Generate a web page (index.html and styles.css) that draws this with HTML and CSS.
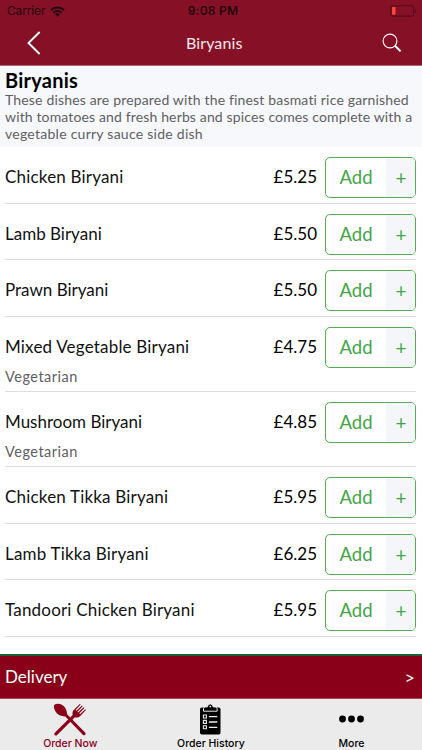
FILE: index.html
```html
<!DOCTYPE html>
<html lang="en">
<head>
<meta charset="utf-8">
<title>Biryanis</title>
<link rel="stylesheet" href="styles.css">
</head>
<body>
<div class="app">
  <header class="top">
    <div class="status">
      <div class="carrier"><span>Carrier</span>
        <svg width="15" height="11" viewBox="0 0 15 11" fill="none" stroke="#25050c" stroke-width="2"><path d="M.9 4.2a9.4 9.4 0 0 1 13.2 0M3.3 6.7a6 6 0 0 1 8.4 0"/><path d="M5.1 8.3a3.4 3.4 0 0 1 4.8 0L7.5 10.7z" fill="#25050c" stroke="none"/></svg>
      </div>
      <span class="clock">9:08 PM</span>
      <svg class="battery" width="27" height="12" viewBox="0 0 27 12"><rect x=".7" y=".7" width="23" height="10.4" rx="2.2" fill="none" stroke="#5b0b1a" stroke-width="1.1"/><rect x="2" y="2" width="3.6" height="7.8" rx=".7" fill="#fb4638"/><path d="M25 4v4q1.5-.6 1.5-2T25 4" fill="#5b0b1a"/></svg>
    </div>
    <div class="nav">
      <svg class="back" width="14" height="24" viewBox="0 0 14 24" fill="none" stroke="#fff" stroke-width="1.9"><path d="M12.6 1 1.5 12l11.1 11"/></svg>
      <h1>Biryanis</h1>
      <svg class="search" width="20" height="20" viewBox="0 0 20 20" fill="none" stroke="#fff"><circle cx="8" cy="8" r="6.9" stroke-width="1.1"/><path d="m13 12.8 5.6 5.6" stroke-width="2"/></svg>
    </div>
  </header>
  <section class="intro">
    <h2>Biryanis</h2>
    <p><span class="l1">These dishes are prepared with the finest basmati rice garnished</span><br><span class="l2">with tomatoes and fresh herbs and spices comes complete with a</span><br><span class="l3">vegetable curry sauce side dish</span></p>
  </section>
  <main class="menu">
    <div class="row"><div class="dish">Chicken Biryani</div><span class="price">£5.25</span><button class="add"><span>Add</span><i>+</i></button></div>
    <div class="row"><div class="dish snug">Lamb Biryani</div><span class="price">£5.50</span><button class="add"><span>Add</span><i>+</i></button></div>
    <div class="row"><div class="dish snug">Prawn Biryani</div><span class="price">£5.50</span><button class="add"><span>Add</span><i>+</i></button></div>
    <div class="row tall"><div class="dish">Mixed Vegetable Biryani<small>Vegetarian</small></div><span class="price">£4.75</span><button class="add"><span>Add</span><i>+</i></button></div>
    <div class="row tall"><div class="dish snug">Mushroom Biryani<small>Vegetarian</small></div><span class="price">£4.85</span><button class="add"><span>Add</span><i>+</i></button></div>
    <div class="row"><div class="dish">Chicken Tikka Biryani</div><span class="price">£5.95</span><button class="add"><span>Add</span><i>+</i></button></div>
    <div class="row"><div class="dish">Lamb Tikka Biryani</div><span class="price">£6.25</span><button class="add"><span>Add</span><i>+</i></button></div>
    <div class="row"><div class="dish">Tandoori Chicken Biryani</div><span class="price">£5.95</span><button class="add"><span>Add</span><i>+</i></button></div>
  </main>
  <div class="delivery"><span>Delivery</span><span class="arrow">&gt;</span></div>
  <nav class="tabs">
    <div class="tab active">
      <svg width="34" height="34" viewBox="0 0 34 34" fill="#8b0019"><path d="M1.4 1.8C4.3-.3 9.6 1 12 4.6c1.8 2.6 1.8 5 2.3 6.8l17.8 18.2c1.5 1.7-.7 3.8-2.3 2.2L12.3 13.4c-2.4-.4-5.3-.2-7.7-2.4C1.4 8.1.1 3.9 1.4 1.8z"/><path d="M1.8 29.7 19.7 12c-.4-2.4-.2-3.8 1.3-5.3l5.8-5.8.8.7-5 5.3.8.8 5.5-5.3.8.8-5.3 5.5.8.8 5.4-5.2.8.8-5.2 5.4.8.8 5.2-5 .7.8-5.7 5.8c-1.8 1.7-3.4 1.8-5.3 1.3L4.1 32c-1.7 1.6-3.9-.6-2.3-2.3z"/></svg>
      <span>Order Now</span>
    </div>
    <div class="tab">
      <svg width="22" height="33" viewBox="0 0 22 33"><rect x="0" y="4.5" width="20.5" height="27" rx="1.8" fill="#000"/><path d="M3.5 8.2V5.6q0-1.7 2-1.7h1.9Q7.8.9 10.3.9t2.9 3h1.9q2 0 2 1.7v2.6z" fill="#000" stroke="#ebebeb" stroke-width="1"/><circle cx="10.3" cy="3.6" r=".9" fill="#ebebeb"/><g fill="none" stroke="#ebebeb"><path d="M8.9 13.6h8.4M8.9 19h8.4M8.9 24.4h8.4" stroke-width="1.4"/><path d="M3.4 12h3v3h-3zM3.4 17.4h3v3h-3zM3.4 22.8h3v3h-3z" stroke-width="1.1"/></g></svg>
      <span>Order History</span>
    </div>
    <div class="tab">
      <svg width="25" height="34" viewBox="0 0 25 34"><circle cx="3.5" cy="16" r="3.4"/><circle cx="12.5" cy="16" r="3.4"/><circle cx="21.5" cy="16" r="3.4"/></svg>
      <span>More</span>
    </div>
  </nav>
</div>
</body>
</html>
```
FILE: styles.css
```css
* { box-sizing: border-box; }
body { margin: 0; background: #fff; font-family: Lato, "Liberation Sans", sans-serif; color: #111; }
.app { width: 422px; height: 750px; display: flex; flex-direction: column; overflow: hidden; white-space: nowrap; }
h1, h2, p { margin: 0; font-weight: 400; }
svg { display: block; flex: none; }

.top { height: 66px; background: #861127; border-bottom: 1px solid #b96375; flex: none; }
.status { height: 22px; display: grid; grid-template-columns: 1fr auto 1fr; align-items: center; padding: 0 5px 0 7px; font: 12px/22px Inter, sans-serif; color: #25050c; }
.carrier { display: flex; align-items: center; gap: 5px; }
.carrier span { letter-spacing: -.15px; }
.clock { font-weight: 600; letter-spacing: .25px; padding-left: 2px; }
.battery { justify-self: end; }
.nav { height: 41px; display: grid; grid-template-columns: 1fr auto 1fr; align-items: center; padding: 0 20px 0 26.5px; color: #fff; }
.nav h1 { font-size: 16px; line-height: 20px; letter-spacing: .1px; color: #f9e9ec; }
.search { justify-self: end; }

.intro { height: 81px; flex: none; background: #f7f8fb; padding: 2px 5px 0; }
.intro h2 { font-size: 20px; font-weight: 700; line-height: 24px; letter-spacing: .25px; color: #000; }
.intro p { font-size: 14px; line-height: 17px; color: #606062; margin-top: -1px; }
.l1 { letter-spacing: .17px; }
.l2 { letter-spacing: .14px; }
.l3 { letter-spacing: .26px; }

.menu { flex: 1; padding: 0 6px 0 5px; }
.row { height: 56.67px; display: flex; align-items: flex-start; border-bottom: 1px solid #dedede; padding-top: 10px; }
.row.tall { height: 75px; }
.dish { flex: 1; font-size: 17px; line-height: 40px; letter-spacing: .19px; }
.dish.snug { letter-spacing: 0; }
.dish small { display: block; font-size: 14.5px; line-height: 20px; letter-spacing: .5px; color: #606060; }
.price { font-size: 17px; line-height: 40px; margin-right: 8px; color: #000; }
.add { width: 91px; height: 41px; display: flex; padding: 0; border: 1px solid #53ae56; border-radius: 5px; background: #fff; color: #43a447; font-family: inherit; line-height: 39px; }
.add span { flex: 1; font-size: 18.5px; }
.add i { width: 29px; background: #f5f6f9; border-radius: 0 4px 4px 0; font-style: normal; font-size: 19px; padding-left: 1px; }

.delivery { height: 45px; flex: none; display: flex; justify-content: space-between; background: #8b0019; border-top: 2px solid #17613e; border-bottom: 1px solid #ad4354; padding: 0 7px 0 5px; font-size: 17px; line-height: 41px; color: #fff; }
.arrow { font-size: 18px; line-height: 43px; }
.tabs { height: 51px; flex: none; display: grid; grid-template-columns: repeat(3, 140.6px); background: #ebebeb; color: #000; }
.tab { display: flex; flex-direction: column; align-items: center; justify-content: space-between; padding: 4px 0 1px; font-size: 10.5px; font-weight: 500; font-family: Inter, sans-serif; }
.tab span { line-height: 13px; }
.active { color: #8b0019; }
```
